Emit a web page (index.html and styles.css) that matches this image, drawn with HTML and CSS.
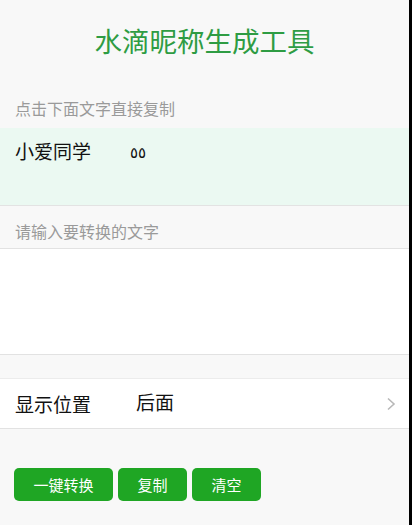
FILE: index.html
```html
<!DOCTYPE html>
<html lang="zh">
<head>
<meta charset="utf-8">
<link rel="stylesheet" href="styles.css">
</head>
<body>
<div class="page">
  <h1 class="title">水滴昵称生成工具</h1>
  <div class="label label-copy">点击下面文字直接复制</div>
  <div class="result"><span class="name">小爱同学</span><span class="drops">٥٥</span></div>
  <div class="label label-input">请输入要转换的文字</div>
  <div class="textarea"></div>
  <div class="gap"></div>
  <div class="row">
    <span class="row-key">显示位置</span>
    <span class="row-val">后面</span>
    <svg class="chev" width="10" height="14" viewBox="0 0 10 14"><polyline points="2,1.5 8,7 2,12.5" fill="none" stroke="#b8b8b8" stroke-width="1.6"/></svg>
  </div>
  <div class="buttons">
    <button class="btn btn-wide">一键转换</button>
    <button class="btn">复制</button>
    <button class="btn">清空</button>
  </div>
</div>
</body>
</html>
```
FILE: styles.css
```css
html { background: #000; }
body {
  margin: 0;
  font-family: "Noto Sans CJK SC", "Noto Sans", sans-serif;
}
.page {
  width: 409px;
  min-height: 525px;
  background: #f8f8f8;
}
.title {
  margin: 0;
  height: 80px;
  line-height: 80px;
  text-align: center;
  font-size: 27.5px;
  font-weight: 400;
  color: #2e9c43;
}
.label {
  box-sizing: border-box;
  padding-left: 15px;
  font-size: 16px;
  line-height: 24px;
  color: #9a9a9a;
}
.label-copy {
  height: 48px;
  padding-top: 16px;
}
.result {
  box-sizing: border-box;
  height: 78px;
  padding: 11px 0 0 15px;
  background: #ebf9f2;
  border-bottom: 1px solid #e3e3e3;
  line-height: 24px;
  font-size: 19px;
  color: #111;
  display: flex;
}
.drops {
  margin-left: 39px;
  font-family: "DejaVu Sans", sans-serif;
  font-size: 15px;
  letter-spacing: 1px;
  position: relative;
  top: 2px;
}
.label-input {
  height: 43px;
  padding-top: 13px;
  border-bottom: 1px solid #e2e2e2;
}
.textarea {
  height: 105px;
  background: #fff;
  border-bottom: 1px solid #e2e2e2;
}
.gap { height: 23px; }
.row {
  box-sizing: border-box;
  height: 51px;
  background: #fff;
  border-top: 1px solid #ececec;
  border-bottom: 1px solid #e2e2e2;
  display: flex;
  align-items: center;
  padding: 0 13px 0 15px;
  font-size: 19px;
  color: #111;
}
.row-key { width: 121px; }
.row-val { flex: 1; position: relative; top: -2px; }
.chev { display: block; }
.buttons {
  display: flex;
  gap: 5px;
  padding: 39px 0 0 14px;
}
.btn {
  height: 33px;
  width: 69px;
  border: none;
  border-radius: 5px;
  background: #1fa624;
  color: #fff;
  font-family: "Noto Sans CJK SC", sans-serif;
  font-size: 15px;
  padding: 0;
}
.btn-wide { width: 99px; }
```
